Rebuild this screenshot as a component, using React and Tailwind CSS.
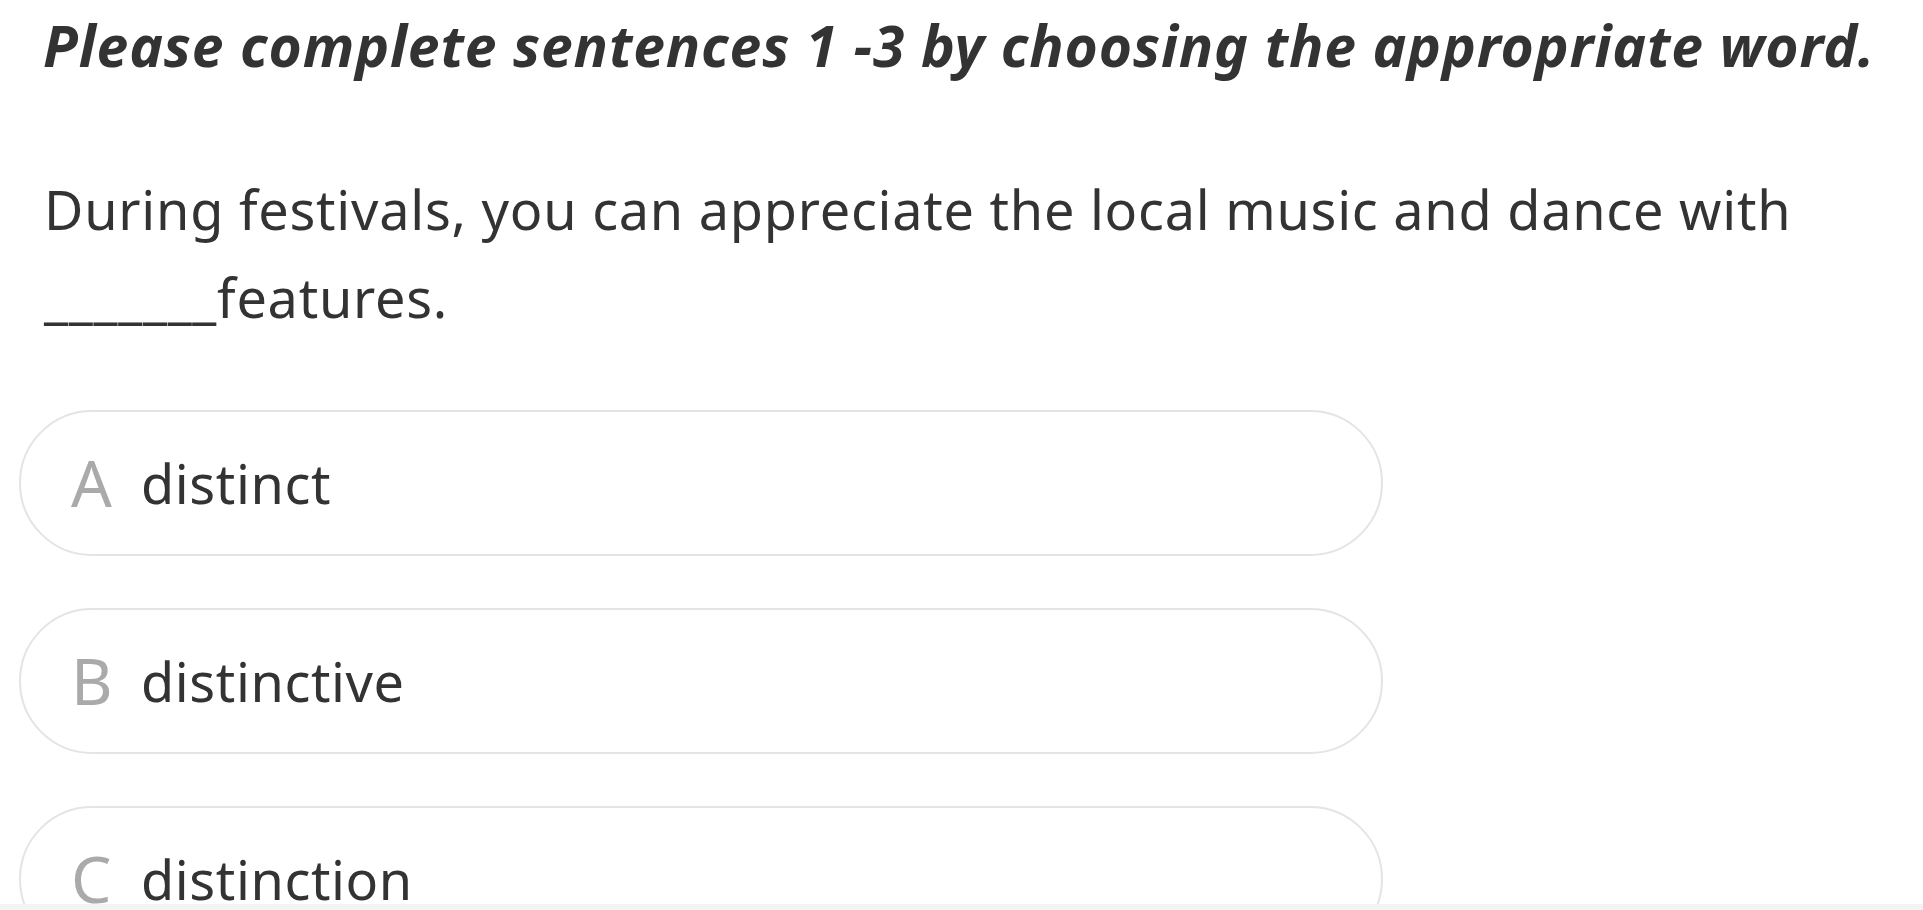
import React from "react";

const options = [
  { letter: "A", text: "distinct" },
  { letter: "B", text: "distinctive" },
  { letter: "C", text: "distinction" },
];

export default function App() {
  return (
    <div className="relative h-[910px] overflow-hidden bg-white font-['Noto_Sans',sans-serif] text-[#333333]">
      <div className="flex flex-col">
        <h1 className="mt-[8px] pl-[43px] text-[57px] font-bold italic leading-[74px] tracking-[0.87px]">
          Please complete sentences 1 -3 by choosing the appropriate word.
        </h1>
        <p className="mt-[83px] pl-[44px] pr-[40px] text-[54px] leading-[88px] tracking-[0.75px]">
          During festivals, you can appreciate the local music and dance with
          <br />
          _______features.
        </p>
        <div className="mt-[69px] flex flex-col gap-[52px] pl-[19px]">
          {options.map((o) => (
            <div
              key={o.letter}
              className="flex h-[146px] w-[1364px] shrink-0 items-center rounded-full border-2 border-[#e4e4e4] pl-[50px]"
            >
              <span className="w-[70px] shrink-0 text-[64px] leading-[1.2] text-[#aaaaaa]">{o.letter}</span>
              <span className="text-[54px] leading-[1.2] tracking-[0.6px]">{o.text}</span>
            </div>
          ))}
        </div>
      </div>
      <div className="fixed bottom-0 left-0 h-[6px] w-full bg-[#f4f4f4]" />
    </div>
  );
}
